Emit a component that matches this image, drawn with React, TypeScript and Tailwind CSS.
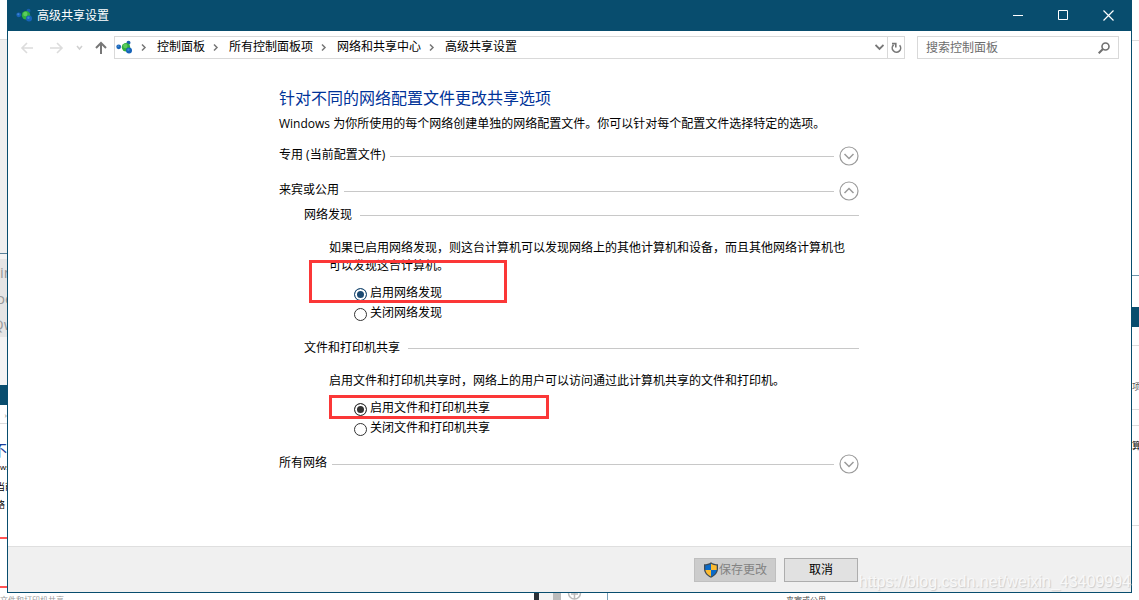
import type { ReactNode } from 'react';

const crumbs = ['控制面板', '所有控制面板项', '网络和共享中心', '高级共享设置'];

function NetworkIcon() {
  return (
    <svg width="17" height="16" viewBox="0 0 17 16" className="shrink-0" aria-hidden="true">
      <circle cx="12.500" cy="2.800" r="2" fill="#1a5fae" />
      <circle cx="2.700" cy="6.800" r="2.400" fill="#1763b8" />
      <circle cx="2.300" cy="6.200" r="1" fill="#3f86d2" />
      <circle cx="10" cy="7.300" r="4.200" fill="#2fae3f" />
      <circle cx="9.300" cy="6" r="2.200" fill="#5ccb5d" />
      <circle cx="13" cy="10.500" r="3" fill="#1763b8" />
      <circle cx="12.400" cy="9.700" r="1.200" fill="#3f86d2" />
    </svg>
  );
}

function ShieldIcon() {
  return (
    <svg width="16" height="16" viewBox="0 0 16 16" className="shrink-0" aria-hidden="true">
      <path d="M8 0.300C6 1.800 3.700 2.300 1 2.300v4.500c0 4 2.700 7 7 9 4.300-2 7-5 7-9V2.300c-2.700 0-5-.5-7-2z" fill="#3e4a54" />
      <path d="M8 1.800C6.200 2.900 4.300 3.300 2.300 3.400V8H8z" fill="#0a6ac8" />
      <path d="M8 1.800c1.800 1.100 3.700 1.500 5.700 1.600V8H8z" fill="#fdbb30" />
      <path d="M2.400 8c.4 2.900 2.400 5 5.600 6.600V8z" fill="#fdbb30" />
      <path d="M13.600 8c-.4 2.900-2.400 5-5.600 6.600V8z" fill="#0a6ac8" />
    </svg>
  );
}

function ArrowIcon({ d, color, width = 2 }: { d: string; color: string; width?: number }) {
  return (
    <svg width="14" height="14" viewBox="0 0 14 14" fill="none" stroke={color} strokeWidth={width} aria-hidden="true">
      <path d={d} />
    </svg>
  );
}

function TitleBar() {
  return (
    <header className="flex h-[31px] shrink-0 items-center bg-[#084d6e] pl-2 text-white">
      <NetworkIcon />
      <h1 className="ml-1 flex-1">高级共享设置</h1>
      <button type="button" aria-label="最小化" className="flex h-full w-[45px] items-center justify-center">
        <svg width="11" height="11" stroke="#fff" fill="none"><path d="M0 5.500h10" /></svg>
      </button>
      <button type="button" aria-label="最大化" className="flex h-full w-[45px] items-center justify-center">
        <svg width="11" height="11" stroke="#fff" fill="none"><path d="M.5 .5h9v9h-9z" /></svg>
      </button>
      <button type="button" aria-label="关闭" className="flex h-full w-[45px] items-center justify-center">
        <svg width="11" height="11" stroke="#fff" strokeWidth="1.200" fill="none"><path d="M.5 .5l10 10M10.500 .5l-10 10" /></svg>
      </button>
    </header>
  );
}

function Toolbar() {
  return (
    <div className="flex h-[31px] shrink-0 items-center px-3 pt-0.5">
      <button type="button" aria-label="后退">
        <ArrowIcon d="M13 7H2M7 2 2 7l5 5" color="#dcdcdc" width={1.6} />
      </button>
      <button type="button" aria-label="前进" className="ml-4">
        <ArrowIcon d="M0 7h11M7 2l5 5-5 5" color="#dcdcdc" width={1.6} />
      </button>
      <button type="button" aria-label="最近的位置" className="ml-3">
        <svg width="7" height="6" fill="none" stroke="#d0d0d0" strokeWidth="1.500"><path d="M1 1l2.500 3L6 1" /></svg>
      </button>
      <button type="button" aria-label="上移" className="mr-1.5 ml-[11px]">
        <ArrowIcon d="M7 13V2M2 7l5-5 5 5" color="#777" />
      </button>
      <nav aria-label="地址" className="flex h-[23px] flex-1 items-center border border-[#d9d9d9] pl-px">
        <NetworkIcon />
        {crumbs.map((crumb) => (
          <div key={crumb} className="flex items-center">
            <svg width="24" height="9" fill="none" stroke="#777" strokeWidth="1.500" aria-hidden="true">
              <path d="M9 1.500l3 3-3 3" />
            </svg>
            <a href="#" className="-mt-0.5">{crumb}</a>
          </div>
        ))}
        <button type="button" aria-label="以前的位置" className="ml-auto px-[3px]">
          <svg width="9" height="7" fill="none" stroke="#777" strokeWidth="1.800"><path d="M.5 1l4 4 4-4" /></svg>
        </button>
        <button type="button" aria-label="刷新" className="flex h-full w-[17px] items-center justify-center border-l border-[#d9d9d9]">
          <svg width="11" height="12" viewBox="0 0 11 12" fill="none" stroke="#777" strokeWidth="1.600">
            <path d="M2.600 2.900A4.200 4.200 0 1 0 8.600 3.200" />
            <path d="M1 1.600h3.800v3.800" />
          </svg>
        </button>
      </nav>
      <label className="ml-3 flex h-[23px] w-[202px] items-center border border-[#d9d9d9] px-2">
        <input type="text" aria-label="搜索控制面板" placeholder="搜索控制面板" className="min-w-0 flex-1 outline-none placeholder:text-[#6d6d6d]" />
        <svg width="12" height="12" fill="none" stroke="#707070" strokeWidth="1.600" aria-hidden="true">
          <circle cx="7.500" cy="4.500" r="3.500" />
          <path d="M5 7L.7 11.300" strokeWidth="2" />
        </svg>
      </label>
    </div>
  );
}

function ProfileRow({ title, open = false }: { title: string; open?: boolean }) {
  return (
    <div className="flex h-5 items-center gap-[5px]">
      <h3 className="-mt-0.5">{title}</h3>
      <div className="h-px flex-1 bg-[#c8c8c8]" />
      <button type="button" aria-label={title} aria-expanded={open}>
        <svg width="20" height="20" fill="none" stroke="#9b9b9b" className="block">
          <circle cx="10" cy="10" r="9" strokeWidth="1.200" />
          <path d={open ? 'M5.500 12l4.500-4.500 4.500 4.500' : 'M5.500 8l4.500 4.500L14.500 8'} strokeWidth="1.500" />
        </svg>
      </button>
    </div>
  );
}

interface OptionGroupProps {
  title: string;
  text: string;
  name: string;
  options: string[];
  tint: string;
  children?: ReactNode;
}

function OptionGroup({ title, text, name, options, tint, children }: OptionGroupProps) {
  return (
    <section className="relative pl-[25px]">
      <div className="-ml-[25px] flex h-5 items-center gap-2">
        <h4>{title}</h4>
        <div className="h-px flex-1 bg-[#c8c8c8]" />
      </div>
      <p className="mt-[14px] pr-3 leading-[18px]">{text}</p>
      <div role="radiogroup" aria-label={title} className="mt-[9px] pl-[25px]">
        {options.map((option, i) => (
          <label key={option} className="flex h-5 items-center gap-[3px]">
            <input
              type="radio"
              name={name}
              defaultChecked={i === 0}
              className={`size-[13px] appearance-none rounded-full border border-[#333] bg-white checked:border-current checked:bg-current checked:shadow-[inset_0_0_0_2px_white] ${tint}`}
            />
            <span className="-mt-0.5">{option}</span>
          </label>
        ))}
      </div>
      {children}
    </section>
  );
}

// slivers of the page that stay visible behind the window
function LeftEdge() {
  return (
    <div aria-hidden="true" className="flex w-[7px] shrink-0 flex-col overflow-hidden whitespace-nowrap">
      <div className="h-10 border-b border-[#ddd]" />
      <div className="h-[214px] border-b border-[#5a8199] bg-[#efefef]" />
      <div className="h-[5px] bg-[#f3f3f3]" />
      <div className="h-[78px] bg-[#e5e5e5] text-[15px] leading-[26px] text-[#999]">
        <div>in</div>
        <div className="-ml-1">oe</div>
        <div className="-ml-2">Qw</div>
      </div>
      <div className="h-12 bg-[#f3f3f3]" />
      <div className="h-5 bg-[#084d6e]" />
      <div className="h-[19px] border-b border-[#ddd] text-right text-[8px] leading-[20px] text-[#777]">›</div>
      <div className="mt-[18px] -ml-2 h-4 text-[15px] leading-4 text-[#1a3f9c]">不</div>
      <div className="h-5 text-[8px] leading-[18px]">ws</div>
      <div className="-ml-1 h-[18px] text-[9px] leading-[18px]">当前</div>
      <div className="-ml-1 h-[18px] text-[9px] leading-[18px]">络</div>
      <div className="mt-[23px] h-[51px] border-y-2 border-[#f55]" />
    </div>
  );
}

function RightEdge() {
  return (
    <div aria-hidden="true" className="flex w-[7px] shrink-0 flex-col overflow-hidden whitespace-nowrap">
      <div className="h-[41px] border-b border-[#ddd]" />
      <div className="h-[235px] border-b border-[#6f96ac]" />
      <div className="mt-[31px] h-5 bg-[#084d6e]" />
      <div className="h-[19px] border-b border-[#ddd]" />
      <div className="h-16 border-b border-[#ddd] pt-8 text-[9px] leading-[18px] text-[#555]">项</div>
      <div className="h-4 border-b border-[#ddd]" />
      <div className="h-[100px] border-b border-[#ddd] pt-[11px] text-[9px] leading-[18px]">算</div>
    </div>
  );
}

function BottomEdge() {
  return (
    <div aria-hidden="true" className="flex h-[7px] shrink-0 overflow-hidden text-[8px] leading-[14px] text-[#444]">
      <div className="w-[534px] text-[#999]">文件和打印机共享</div>
      <div className="w-[5px] bg-[#2b3036]" />
      <div className="w-[14px] bg-[#f3f3f3]" />
      <div className="w-2 bg-[#bbb]" />
      <div className="flex w-[47px] border-r border-[#7ba0b8] pl-1.5">
        <svg width="15" height="7" fill="none" stroke="#bbb" strokeWidth="1.500">
          <circle cx="7.500" cy="0" r="6" />
          <path d="M7.500 0v6M4 1h7" />
        </svg>
      </div>
      <div className="pl-[178px]">来宾或公用</div>
    </div>
  );
}

export default function App() {
  return (
    <div className="flex min-h-screen flex-col bg-white font-['Open_Sans','Noto_Sans_CJK_SC',sans-serif] text-xs text-black">
      <div className="flex flex-1">
        <LeftEdge />
        <div className="flex min-w-0 flex-1 flex-col border-x border-b border-[#084d6e] bg-white">
          <TitleBar />
          <Toolbar />
          <main className="flex-1 pt-6 pb-10 pl-[271px]">
            <div className="max-w-[580px]">
              <h2 className="text-base leading-6 text-[#003399]">针对不同的网络配置文件更改共享选项</h2>
              <p className="mt-1 leading-5">Windows 为你所使用的每个网络创建单独的网络配置文件。你可以针对每个配置文件选择特定的选项。</p>
              <div className="mt-3 flex flex-col gap-[15px]">
                <ProfileRow title="专用 (当前配置文件)" />
                <ProfileRow title="来宾或公用" open />
              </div>
              <div className="mt-1 mb-[15px] flex flex-col gap-[14px] pl-[25px]">
                <OptionGroup
                  title="网络发现"
                  name="discovery"
                  text="如果已启用网络发现，则这台计算机可以发现网络上的其他计算机和设备，而且其他网络计算机也可以发现这台计算机。"
                  options={['启用网络发现', '关闭网络发现']}
                  tint="text-[#1c4a72]"
                >
                  <div className="pointer-events-none absolute top-[55px] left-[5px] h-[43px] w-[198px] border-3 border-[#fb3737]" />
                </OptionGroup>
                <OptionGroup
                  title="文件和打印机共享"
                  name="sharing"
                  text="启用文件和打印机共享时，网络上的用户可以访问通过此计算机共享的文件和打印机。"
                  options={['启用文件和打印机共享', '关闭文件和打印机共享']}
                  tint="text-[#333]"
                >
                  <div className="pointer-events-none absolute top-[57px] left-[25px] h-6 w-[220px] border-3 border-[#fb3737]" />
                </OptionGroup>
              </div>
              <ProfileRow title="所有网络" />
            </div>
          </main>
          <footer className="relative flex h-[46px] shrink-0 items-center border-t border-[#dfdfdf] bg-[#f0f0f0] pl-[270px]">
            <div className="flex w-[580px] justify-end gap-2">
              <button type="button" disabled className="flex h-6 w-[82px] items-center justify-center border border-[#bfbfbf] bg-[#ccc] text-[#838383]">
                <ShieldIcon />
                <span>保存更改</span>
              </button>
              <button type="button" className="h-6 w-[74px] border border-[#adadad] bg-[#e1e1e1]">取消</button>
            </div>
            <span className="absolute right-0 bottom-0 font-['Liberation_Sans',sans-serif] text-base leading-5 text-[#f8f8f8] [text-shadow:1px_1px_1px_#ccc]">
              https://blog.csdn.net/weixin_43409994
            </span>
          </footer>
        </div>
        <RightEdge />
      </div>
      <BottomEdge />
    </div>
  );
}
